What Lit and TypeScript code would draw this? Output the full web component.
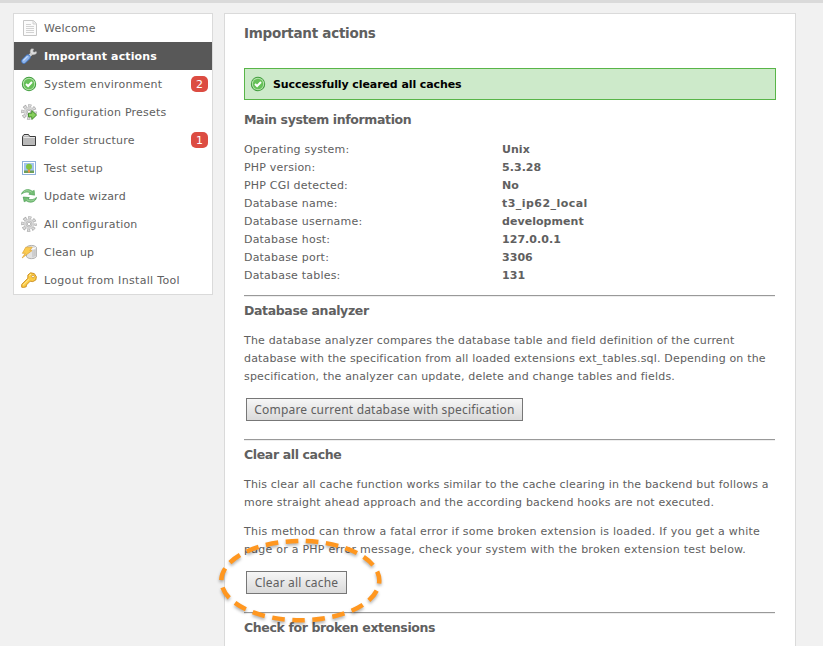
import { LitElement, html, css, svg } from "lit";
import { customElement } from "lit/decorators.js";

const gear = svg`
  <circle cx="8" cy="8" r="6.3" fill="none" stroke="#a6a6a6" stroke-width="3" stroke-dasharray="3.1 1.848" stroke-dashoffset="1.5"/>
  <circle cx="8" cy="8" r="6.2" fill="none" stroke="#dcdcdc" stroke-width="2" stroke-dasharray="1.9 2.97" stroke-dashoffset=".9"/>
  <circle cx="8" cy="8" r="4.9" fill="#dcdcdc" stroke="#c0c0c0" stroke-width=".6"/>
  <circle cx="8" cy="8" r="3" fill="none" stroke="#bdbdbd" stroke-width=".8"/>
  <circle cx="8" cy="8" r="1.7" fill="#fff" stroke="#a5a5a5" stroke-width=".7"/>`;

const check = svg`
  <circle cx="8" cy="8" r="7.2" fill="#3f9c3c"/>
  <circle cx="8" cy="8" r="6.2" fill="#b5e3ab"/>
  <circle cx="8" cy="8" r="5.2" fill="#66c058"/>
  <path d="M5 8 7.1 10 11 6" fill="none" stroke="#fff" stroke-width="2"/>`;

const icons: Record<string, unknown> = {
  check,
  gear,
  page: svg`
    <path d="M2.5.5H12.5L15.5 3.5V15.5H2.5Z" fill="#fbfbfb" stroke="#c6c6c6"/>
    <path d="M12 .5V4H15.5" fill="#eee" stroke="#d2d2d2"/>
    <path d="M5 4.5H10M5 6.5H13M5 8.5H13M5 10.5H13M5 12.5H13" stroke="#d2d2d2"/>`,
  wrench: svg`
    <path d="M8 8.3 11.4 5" stroke="#d2d2d2" stroke-width="2.8"/>
    <path d="M10.5.8C9 2 8.8 4.2 10 5.7 11.6 7.3 14.2 6.9 15.7 5L15.2 3.5 13 4.3 11.8 3.2 12.8 1Z" fill="#dedede" stroke="#aaa" stroke-width=".5"/>
    <path d="M2.9 13.1 6.9 9.2" stroke="#4a7cc6" stroke-width="5.4" stroke-linecap="round"/>
    <path d="M2.9 13.1 6.9 9.2" stroke="#8db3ea" stroke-width="3.8" stroke-linecap="round"/>
    <path d="M2.6 12.2 6.3 8.6" stroke="#c9dcf8" stroke-width="1.2" stroke-linecap="round"/>`,
  presets: svg`${gear}
    <path d="M7.5 9.2H10.8V6.6L15.6 11 10.8 15.5V12.9H7.5Z" fill="#86cf5b" stroke="#458f2d"/>`,
  folder: svg`
    <path d="M1.5 13.5V4.5L3 2.5H7.5L8.8 4.5H14.5V13.5Z" fill="#b9b9b9" stroke="#3c3c3c"/>
    <path d="M2.5 5.5H14" stroke="#e6e6e6"/>
    <path d="M3.4 3.5H7.2" stroke="#ddd"/>`,
  picture: svg`
    <rect x="1.5" y="1.5" width="13" height="13" fill="#fff" stroke="#8fb0da"/>
    <rect x="3" y="3" width="10" height="10" fill="#a3c4ee"/>
    <path d="M3 10.5H13V13H3Z" fill="#6f9f58"/>
    <path d="M8 9V12.5" stroke="#ee9048" stroke-width="2"/>
    <circle cx="8" cy="6.7" r="3" fill="#82c442"/>`,
  refresh: svg`
    <path d="M.4 6.2C2 1.6 7.4.2 11.2 3.2L13.2 2.4 13.6 7.2 7.8 6.2 9.2 5C6.4 3.4 3.4 4 .4 6.2Z" fill="#74bd75" stroke="#4a9e50" stroke-width=".6"/>
    <path d="M2.6 3.8C5 2.2 8 2.4 10.6 4.2" fill="none" stroke="#a9dba6" stroke-width=".8"/>
    <path d="M15.6 9.4C14.6 14 9.4 15.6 5.2 12.8L3.2 13.8 2.2 9 8.4 9.6 7 10.9C9.8 12.2 12.8 11.8 15.6 9.4Z" fill="#74bd75" stroke="#3b9444" stroke-width=".6"/>
    <path d="M13.6 11.8C11 13.4 8.4 13.2 5.8 11.7" fill="none" stroke="#a9dba6" stroke-width=".8"/>`,
  clean: svg`
    <path d="M5.5 3.3C7 .8 13.8.8 15.4 3.3V12.7C13.8 15.3 7 15.3 5.5 12.7Z" fill="#e2e2e2" stroke="#a8a8a8" stroke-width=".9"/>
    <path d="M6 3.6C8 5.3 13 5.3 15 3.6" fill="none" stroke="#fff"/>
    <path d="M12 6V13.2M13.9 5.6V12.4" stroke="#bbb"/>
    <path d="M4.8 3.2H11.2L8.8 6.6H11L1.2 13.9 4.2 9.3H1.4Z" fill="#fbcb50" stroke="#dfa93d" stroke-width=".8"/>`,
  key: svg`
    <path d="M9.6.8 13.3 1.6 15.4 4.8 14.8 8 11.8 9.6 9.2 9.2 5.4 13 5.2 14.8 2.6 15.4.7 15.2V12.4L6.8 6.3 6.9 3Z" fill="#fbcb45" stroke="#c98a1a" stroke-width=".9"/>
    <path d="M2 13.2 8 7.3M8.2 3.6 10 2.1" stroke="#ffeb9c"/>
    <circle cx="12" cy="4.5" r="1.3" fill="#fff" stroke="#c98a1a" stroke-width=".7"/>`,
};

const icon = (name: string) => html`<svg class="icon" viewBox="0 0 16 16">${icons[name]}</svg>`;

const menu: { icon: string; label: string; badge?: number; active?: boolean; loose?: boolean }[] = [
  { icon: "page", label: "Welcome" },
  { icon: "wrench", label: "Important actions", active: true },
  { icon: "check", label: "System environment", badge: 2 },
  { icon: "presets", label: "Configuration Presets" },
  { icon: "folder", label: "Folder structure", badge: 1 },
  { icon: "picture", label: "Test setup", loose: true },
  { icon: "refresh", label: "Update wizard" },
  { icon: "gear", label: "All configuration" },
  { icon: "clean", label: "Clean up" },
  { icon: "key", label: "Logout from Install Tool", loose: true },
];

const info = [
  ["Operating system:", "Unix"],
  ["PHP version:", "5.3.28"],
  ["PHP CGI detected:", "No"],
  ["Database name:", "t3_ip62_local"],
  ["Database username:", "development"],
  ["Database host:", "127.0.0.1"],
  ["Database port:", "3306"],
  ["Database tables:", "131"],
];

@customElement("app-root")
export class AppRoot extends LitElement {
  static styles = css`
    :host {
      display: block;
      height: 646px;
      overflow: hidden;
      box-sizing: border-box;
      border-top: 3px solid #dadada;
      background: #f1f1f1;
      color: #606060;
      font: 11px/18px Verdana, "DejaVu Sans", sans-serif;
    }
    .page { display: flex; align-items: flex-start; gap: 11px; padding: 10px 0 0 13px; }
    .menu { width: 198px; border: 1px solid #dadada; background: #fff; }
    .item { display: flex; align-items: center; height: 28px; padding: 0 4px 0 7px; }
    .item.active { background: #585858; color: #fff; font-weight: bold; }
    .icon { width: 16px; height: 16px; flex: none; }
    .label { margin-left: 7px; padding-top: 2px; flex: 1; white-space: nowrap; letter-spacing: 0.2px; }
    .active .label { letter-spacing: 0.11px; }
    .loose .label { letter-spacing: 0.32px; }
    .badge { width: 17px; height: 16px; border-radius: 5px; background: #dc4c42; color: #fff; text-align: center; line-height: 17px; }
    .main { position: relative; width: 532px; height: 660px; padding: 10px 19px 0; border: 1px solid #dadada; background: #fff; }
    h1, h2, p { margin: 0; white-space: nowrap; }
    h1 { font-size: 13.5px; line-height: 18px; letter-spacing: -0.27px; }
    h2 { font-size: 12.5px; line-height: 18px; letter-spacing: -0.37px; }
    .alert { display: flex; align-items: center; box-sizing: border-box; height: 32px; margin: 26px 0 11px; padding-left: 5px; border: 1px solid #58b548; background: #cdeaca; color: #000; font-weight: bold; }
    .alert .label { letter-spacing: -0.09px; }
    .info { display: grid; grid-template-columns: 258px 1fr; margin-top: 12px; letter-spacing: 0.2px; }
    .value { font-weight: bold; letter-spacing: 0.05px; }
    .value.spaced { letter-spacing: 0.45px; }
    .rule { width: 531px; height: 1px; margin: 18px 0 5px; border-top: 1px solid #999; background: #eee; }
    .info + .rule { margin-top: 10px; }
    .text { margin-top: 12px; letter-spacing: 0.17px; }
    .text.loose { letter-spacing: 0.25px; }
    .text + .text { margin-top: 11px; }
    .button { display: block; height: 23px; margin: 12px 0 0 2px; padding: 0; border: 1px solid #777; background: linear-gradient(#f6f6f6, #dadada); color: #606060; font: 12px/20px "Noto Sans", sans-serif; letter-spacing: 0.19px; white-space: nowrap; }
    .wide { width: 277px; }
    .small { width: 101px; }
    .mark { position: absolute; left: -11px; top: 520px; width: 174px; height: 96px; overflow: visible; filter: drop-shadow(0 2px 1.5px rgba(0, 0, 0, 0.3)); }
  `;

  render() {
    return html`<div class="page">
      <nav class="menu">
        ${menu.map((m) => html`<div class="item ${m.active ? "active" : ""} ${m.loose ? "loose" : ""}">
          ${icon(m.icon)}<span class="label">${m.label}</span>${m.badge ? html`<span class="badge">${m.badge}</span>` : ""}
        </div>`)}
      </nav>
      <main class="main">
        <h1>Important actions</h1>
        <div class="alert">${icon("check")}<span class="label">Successfully cleared all caches</span></div>
        <h2>Main system information</h2>
        <div class="info">${info.map(([k, v]) => html`<span>${k}</span><span class="value ${v.includes("_") ? "spaced" : ""}">${v}</span>`)}</div>
        <div class="rule"></div>
        <h2>Database analyzer</h2>
        <p class="text">The database analyzer compares the database table and field definition of the current<br>database with the specification from all loaded extensions ext_tables.sql. Depending on the<br>specification, the analyzer can update, delete and change tables and fields.</p>
        <button class="button wide">Compare current database with specification</button>
        <div class="rule"></div>
        <h2>Clear all cache</h2>
        <p class="text">This clear all cache function works similar to the cache clearing in the backend but follows a<br>more straight ahead approach and the according backend hooks are not executed.</p>
        <p class="text loose">This method can throw a fatal error if some broken extension is loaded. If you get a white<br>page or a PHP error message, check your system with the broken extension test below.</p>
        <button class="button small">Clear all cache</button>
        <div class="rule"></div>
        <h2>Check for broken extensions</h2>
        <svg class="mark" viewBox="214 534 174 96">
          <ellipse cx="300.3" cy="580.6" rx="79" ry="39.6" fill="none" stroke="#ff9720" stroke-width="4.5" pathLength="380" stroke-dasharray="12.5 7.5" stroke-dashoffset="9.5"/>
        </svg>
      </main>
    </div>`;
  }
}
